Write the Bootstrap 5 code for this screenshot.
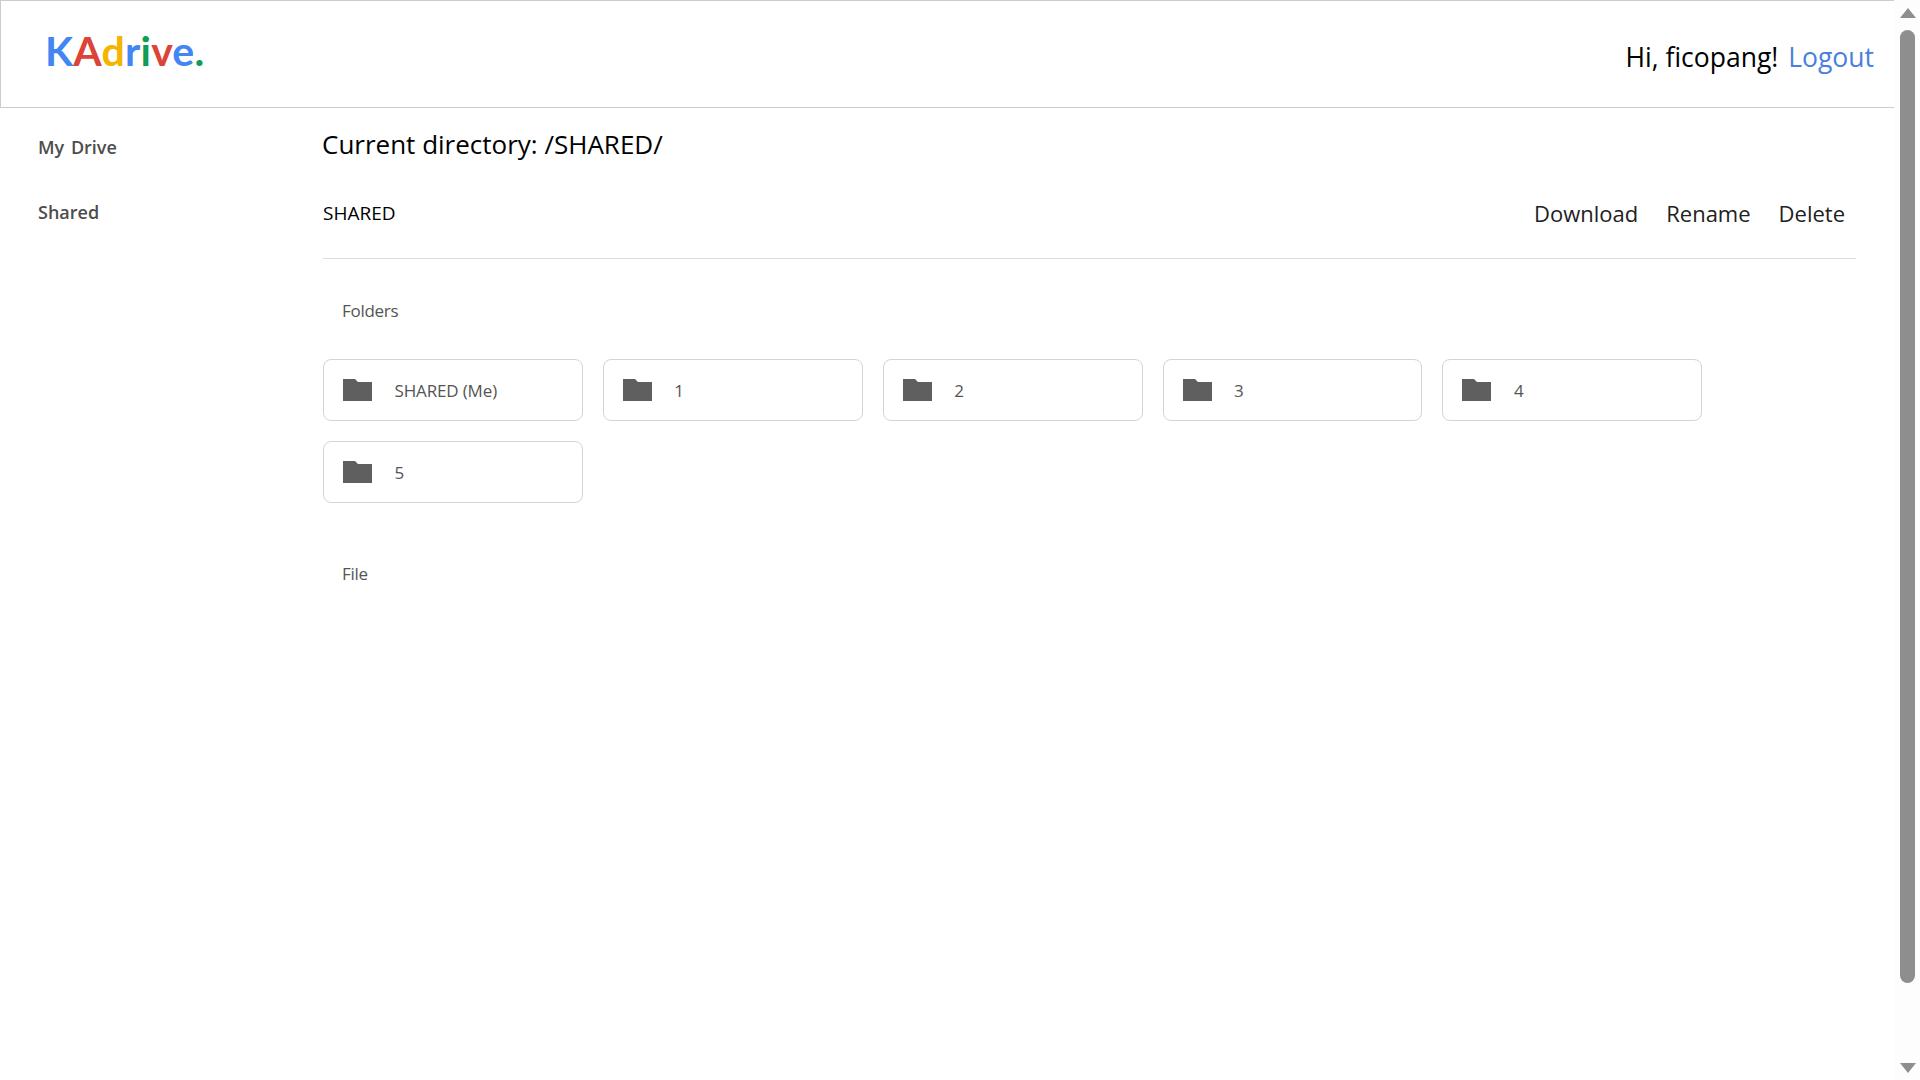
<!DOCTYPE html>
<html lang="en">
<head>
<meta charset="utf-8">
<title>KAdrive</title>
<link href="https://cdn.jsdelivr.net/npm/bootstrap@5.3.0/dist/css/bootstrap.min.css" rel="stylesheet">
<style>
html,body{height:100%;overflow:hidden}
body{font-family:"Open Sans","Noto Sans",sans-serif;background:#fff;color:#000}
.shell{height:1080px}
.pagecol{width:1894px;flex:none}
.topbar{height:108px;border:1px solid #ccc;border-right:0;padding:0 20px 0 44px}
.logo-text{font-family:Lato,sans-serif;font-weight:700;font-size:41px;line-height:1;letter-spacing:.2px;margin-top:-8px}
.c-b{color:#4285f4}.c-r{color:#db4437}.c-y{color:#f4b400}.c-g{color:#0f9d58}
.greet{font-size:26.5px;margin-top:7px}
.greet a{color:#4a7fdd;text-decoration:none;margin-left:3px}
.sidebar{width:323px;flex:none;padding:24px 0 0 38px}
.side-link{display:block;color:#4d4d4d;font-size:18px;font-weight:600;word-spacing:2px;line-height:30px;margin-bottom:35px;text-decoration:none}
.mainpane{width:1533px;flex:none}
.dirline{font-size:26px;line-height:36px;margin-top:18px;margin-left:-1px}
.pathbar{height:78px;margin-top:19px;border-bottom:1px solid #ddd;padding:0 11px 13px 0}
.pathname{font-size:19px;font-weight:500}
.pathact{font-size:22px;font-weight:500;color:#212121;text-decoration:none}
.pathacts{column-gap:28px}
.seclabel{color:#555;font-size:17px;font-weight:500;letter-spacing:-.3px;line-height:24px;padding-left:19px}
.lbl-folders{margin-top:40px}
.lbl-file{margin-top:59px}
.grid-f{column-gap:20px;row-gap:20px;margin:36px 0 0}
.fcard{width:259.85px;height:62px;border:1px solid #d4d4d4;border-radius:8px;padding:2px 0 0 19px;color:#555;font-size:17px;letter-spacing:-.15px}
.fcard svg{width:29px;height:22px;flex:none;margin:-2px 22.5px 0 0}
.sb{width:26px;flex:none;background:#fdfdfd}
.sb-thumb{position:absolute;left:6px;top:30px;width:15px;height:953px;background:#8e8e8e;border-radius:8px}
.sb-up,.sb-down{position:absolute;left:6px;width:0;height:0;border-left:8px solid transparent;border-right:8px solid transparent}
.sb-up{top:8px;border-bottom:10px solid #8e8e8e}
.sb-down{top:1063px;border-top:10px solid #8e8e8e}
</style>
</head>
<body>
<div class="shell d-flex">
  <div class="pagecol">
    <header class="topbar d-flex justify-content-between align-items-center">
      <div class="logo-text"><span class="c-b">K</span><span class="c-r">A</span><span class="c-y">d</span><span class="c-b">r</span><span class="c-g">i</span><span class="c-r">v</span><span class="c-b">e</span><span class="c-g">.</span></div>
      <div class="greet">Hi, ficopang! <a href="#">Logout</a></div>
    </header>
    <div class="d-flex">
      <nav class="sidebar">
        <a class="side-link" href="#">My Drive</a>
        <a class="side-link" href="#">Shared</a>
      </nav>
      <main class="mainpane">
        <div class="dirline">Current directory: /SHARED/</div>
        <div class="pathbar d-flex justify-content-between align-items-center">
          <span class="pathname">SHARED</span>
          <div class="pathacts d-flex">
            <a class="pathact" href="#">Download</a>
            <a class="pathact" href="#">Rename</a>
            <a class="pathact" href="#">Delete</a>
          </div>
        </div>
        <div class="seclabel lbl-folders">Folders</div>
        <div class="grid-f d-flex flex-wrap">
          <div class="fcard d-flex align-items-center"><svg viewBox="0 0 29 22"><path fill="#5f5f5f" d="M0 0h12l3 3h14v19H0z"/></svg>SHARED (Me)</div>
          <div class="fcard d-flex align-items-center"><svg viewBox="0 0 29 22"><path fill="#5f5f5f" d="M0 0h12l3 3h14v19H0z"/></svg>1</div>
          <div class="fcard d-flex align-items-center"><svg viewBox="0 0 29 22"><path fill="#5f5f5f" d="M0 0h12l3 3h14v19H0z"/></svg>2</div>
          <div class="fcard d-flex align-items-center"><svg viewBox="0 0 29 22"><path fill="#5f5f5f" d="M0 0h12l3 3h14v19H0z"/></svg>3</div>
          <div class="fcard d-flex align-items-center"><svg viewBox="0 0 29 22"><path fill="#5f5f5f" d="M0 0h12l3 3h14v19H0z"/></svg>4</div>
          <div class="fcard d-flex align-items-center"><svg viewBox="0 0 29 22"><path fill="#5f5f5f" d="M0 0h12l3 3h14v19H0z"/></svg>5</div>
        </div>
        <div class="seclabel lbl-file">File</div>
      </main>
    </div>
  </div>
  <div class="sb position-relative">
    <div class="sb-up"></div>
    <div class="sb-thumb"></div>
    <div class="sb-down"></div>
  </div>
</div>
<script src="https://cdn.jsdelivr.net/npm/bootstrap@5.3.0/dist/js/bootstrap.bundle.min.js"></script>
</body>
</html>
